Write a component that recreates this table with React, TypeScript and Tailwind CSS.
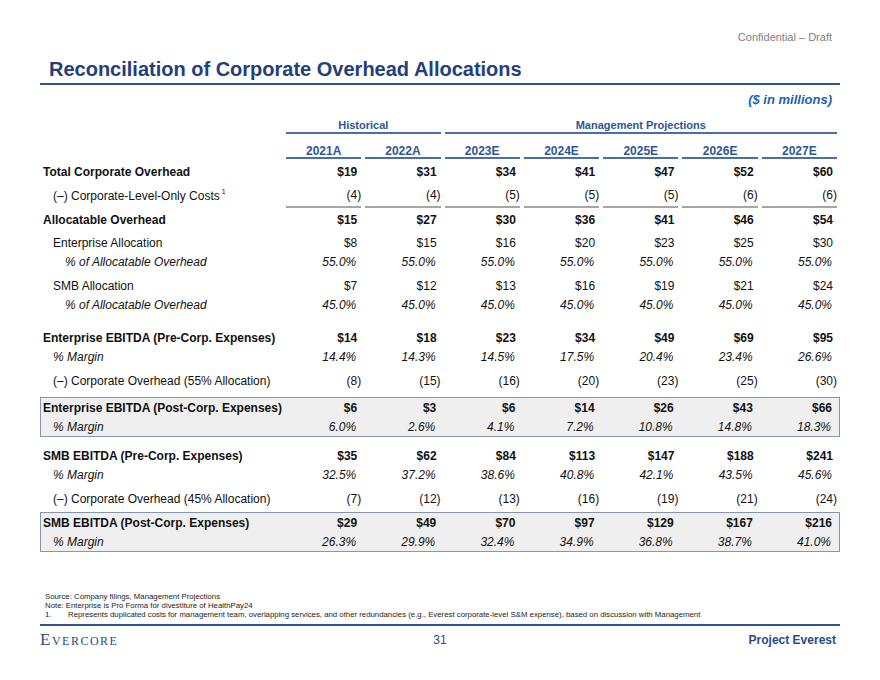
import React from "react";

type RowKind = "bold" | "reg" | "pct";

const GRID = "grid grid-cols-[245px_repeat(7,minmax(0,1fr))]";

function valPad(v: string) {
  if (v.startsWith("(")) return "pr-0";
  if (v.endsWith("%")) return "pr-[5px]";
  return "pr-[4px]";
}

function Row({
  label,
  vals,
  kind,
  indent = 0,
  className = "",
  sep = false,
  sup,
}: {
  label: string;
  vals: string[];
  kind: RowKind;
  indent?: 0 | 1 | 2;
  className?: string;
  sep?: boolean;
  sup?: string;
}) {
  const ind = indent === 0 ? "pl-[3px]" : indent === 1 ? "pl-[13px]" : "pl-[25px]";
  const weight = kind === "bold" ? "font-bold" : kind === "pct" ? "italic" : "";
  return (
    <div className={`${GRID} text-[12px] text-[#111] ${weight} ${className}`}>
      <div className={`${ind} flex items-center whitespace-nowrap`}>
        {label}
        {sup && <span className="text-[7px] ml-[2px] relative -top-[4px]">{sup}</span>}
      </div>
      {vals.map((v, i) => (
        <div key={i} className="h-full">
          <div
            className={`ml-[1px] mr-[3px] h-full flex items-center justify-end ${valPad(v)} ${
              sep ? "border-b-2 border-[#a6a6a6]" : ""
            }`}
          >
            {v}
          </div>
        </div>
      ))}
    </div>
  );
}

export default function App() {
  return (
    <div className="w-[880px] h-[680px] bg-white overflow-hidden font-['Liberation_Sans',Arial,sans-serif]">
      <div className="px-[40px]">
        <div className="pt-[30px] h-[44px] text-right text-[11px] leading-[14px] text-[#808080] pr-[8px]">
          Confidential – Draft
        </div>
        <div className="mt-[13px] pl-[9px] text-[20px] leading-[24px] font-bold text-[#23407a]">
          Reconciliation of Corporate Overhead Allocations
        </div>
        <div className="mt-[2px] h-[2px] bg-[#2f5496]" />
        <div className="mt-[7px] text-right pr-[8px] text-[13px] leading-[16px] font-bold italic text-[#1e63b0]">
          ($ in millions)
        </div>

        {/* group headers */}
        <div className={`${GRID} mt-[10px] text-[11px] leading-[14px] font-bold text-[#2f5597]`}>
          <div className="col-start-2 col-span-2">
            <div className="ml-[1px] mr-[3px] text-center border-b-2 border-[#4a6ea8]">Historical</div>
          </div>
          <div className="col-span-5">
            <div className="ml-[1px] mr-[3px] text-center border-b-2 border-[#4a6ea8]">Management Projections</div>
          </div>
        </div>

        {/* years */}
        <div className={`${GRID} mt-[9px] text-[12px] leading-[12px] font-bold text-[#2f5597]`}>
          <div />
          {["2021A", "2022A", "2023E", "2024E", "2025E", "2026E", "2027E"].map((y) => (
            <div key={y}>
              <div className="ml-[1px] mr-[3px] pt-[2px] text-center border-b-2 border-[#4a6ea8]">{y}</div>
            </div>
          ))}
        </div>

        <Row
          className="mt-[3px] h-[19px]"
          kind="bold"
          label="Total Corporate Overhead"
          vals={["$19", "$31", "$34", "$41", "$47", "$52", "$60"]}
        />
        <Row
          className="mt-[3px] h-[24px]"
          kind="reg"
          indent={1}
          sep
          label="(–) Corporate-Level-Only Costs"
          sup="1"
          vals={["(4)", "(4)", "(5)", "(5)", "(5)", "(6)", "(6)"]}
        />
        <Row
          className="mt-[2px] h-[19px]"
          kind="bold"
          label="Allocatable Overhead"
          vals={["$15", "$27", "$30", "$36", "$41", "$46", "$54"]}
        />
        <Row
          className="mt-[4px] h-[19px]"
          kind="reg"
          indent={1}
          label="Enterprise Allocation"
          vals={["$8", "$15", "$16", "$20", "$23", "$25", "$30"]}
        />
        <Row
          className="h-[19px]"
          kind="pct"
          indent={2}
          label="% of Allocatable Overhead"
          vals={["55.0%", "55.0%", "55.0%", "55.0%", "55.0%", "55.0%", "55.0%"]}
        />
        <Row
          className="mt-[5px] h-[19px]"
          kind="reg"
          indent={1}
          label="SMB Allocation"
          vals={["$7", "$12", "$13", "$16", "$19", "$21", "$24"]}
        />
        <Row
          className="h-[19px]"
          kind="pct"
          indent={2}
          label="% of Allocatable Overhead"
          vals={["45.0%", "45.0%", "45.0%", "45.0%", "45.0%", "45.0%", "45.0%"]}
        />
        <Row
          className="mt-[14px] h-[19px]"
          kind="bold"
          label="Enterprise EBITDA (Pre-Corp. Expenses)"
          vals={["$14", "$18", "$23", "$34", "$49", "$69", "$95"]}
        />
        <Row
          className="h-[19px]"
          kind="pct"
          indent={1}
          label="% Margin"
          vals={["14.4%", "14.3%", "14.5%", "17.5%", "20.4%", "23.4%", "26.6%"]}
        />
        <Row
          className="mt-[5px] h-[19px]"
          kind="reg"
          indent={1}
          label="(–) Corporate Overhead (55% Allocation)"
          vals={["(8)", "(15)", "(16)", "(20)", "(23)", "(25)", "(30)"]}
        />
        <div className="mt-[7px] border border-[#8497b0] bg-[#efefef]">
          <Row
            className="h-[19px] -ml-[1px]"
            kind="bold"
            label="Enterprise EBITDA (Post-Corp. Expenses)"
            vals={["$6", "$3", "$6", "$14", "$26", "$43", "$66"]}
          />
          <Row
            className="h-[19px] -ml-[1px]"
            kind="pct"
            indent={1}
            label="% Margin"
            vals={["6.0%", "2.6%", "4.1%", "7.2%", "10.8%", "14.8%", "18.3%"]}
          />
        </div>
        <Row
          className="mt-[9px] h-[19px]"
          kind="bold"
          label="SMB EBITDA (Pre-Corp. Expenses)"
          vals={["$35", "$62", "$84", "$113", "$147", "$188", "$241"]}
        />
        <Row
          className="h-[19px]"
          kind="pct"
          indent={1}
          label="% Margin"
          vals={["32.5%", "37.2%", "38.6%", "40.8%", "42.1%", "43.5%", "45.6%"]}
        />
        <Row
          className="mt-[5px] h-[19px]"
          kind="reg"
          indent={1}
          label="(–) Corporate Overhead (45% Allocation)"
          vals={["(7)", "(12)", "(13)", "(16)", "(19)", "(21)", "(24)"]}
        />
        <div className="mt-[4px] border border-[#8497b0] bg-[#efefef]">
          <Row
            className="h-[19px] -ml-[1px]"
            kind="bold"
            label="SMB EBITDA (Post-Corp. Expenses)"
            vals={["$29", "$49", "$70", "$97", "$129", "$167", "$216"]}
          />
          <Row
            className="h-[19px] -ml-[1px]"
            kind="pct"
            indent={1}
            label="% Margin"
            vals={["26.3%", "29.9%", "32.4%", "34.9%", "36.8%", "38.7%", "41.0%"]}
          />
        </div>

        {/* footnotes */}
        <div className="mt-[40px] pl-[5px] text-[7.8px] leading-[9px] text-[#222]">
          <div>Source: Company filings, Management Projections</div>
          <div>Note: Enterprise is Pro Forma for divestiture of HealthPay24</div>
          <div className="flex">
            <span className="w-[23px] shrink-0">1.</span>
            <span className="whitespace-nowrap">
              Represents duplicated costs for management team, overlapping services, and other redundancies (e.g.,
              Everest corporate-level S&amp;M expense), based on discussion with Management
            </span>
          </div>
        </div>
        <div className="mt-[5px] h-[2px] bg-[#2f5496]" />
        <div className="mt-[5px] grid grid-cols-3 items-center h-[16px]">
          <div className="font-['Liberation_Serif',serif] text-[17px] leading-[16px] tracking-[1.5px] text-[#2b4a86] [font-variant:small-caps]">
            Evercore
          </div>
          <div className="text-center text-[12px] text-[#2b4a86]">31</div>
          <div className="text-right pr-[4px] text-[12px] font-bold text-[#2b4a86]">Project Everest</div>
        </div>
      </div>
    </div>
  );
}
